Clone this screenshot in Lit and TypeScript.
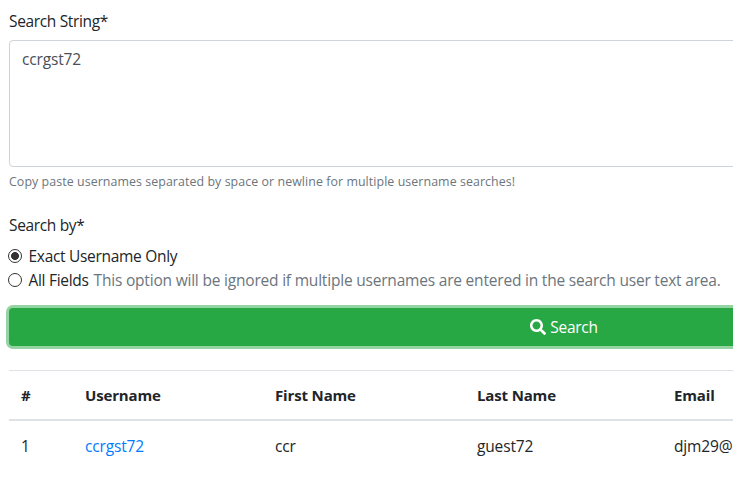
import { LitElement, html, css } from "lit";
import { customElement, state } from "lit/decorators.js";

interface User {
  username: string;
  first: string;
  last: string;
  email: string;
}

@customElement("app-root")
export class AppRoot extends LitElement {
  static styles = css`
    :host {
      display: block;
      box-sizing: border-box;
      height: 486px;
      overflow: hidden;
      background: #fff;
      color: #212529;
      font: 15.5px/24px "Open Sans", "Noto Sans", sans-serif;
      white-space: nowrap;
    }
    * {
      box-sizing: border-box;
    }
    .page {
      width: 1117px;
      padding: 9px 0 0 9px;
    }
    .label {
      display: block;
      height: 24px;
      margin-bottom: 7px;
      letter-spacing: -0.35px;
    }
    .area {
      display: block;
      width: 100%;
      height: 127px;
      padding: 6px 12px;
      border: 1px solid #ced4da;
      border-radius: 4px;
      color: #495057;
      background: #fff;
      font: inherit;
      letter-spacing: -0.15px;
      resize: none;
      outline: none;
    }
    .help {
      height: 20px;
      margin: 5px 0 21px;
      color: #6c757d;
      font-size: 12.4px;
      letter-spacing: 0.07px;
      line-height: 20px;
    }
    .option {
      display: flex;
      align-items: center;
      height: 24px;
      letter-spacing: -0.3px;
    }
    .radio {
      appearance: none;
      width: 14px;
      height: 14px;
      margin: 0 6.500px 1px -1px;
      border: 1.5px solid #333;
      border-radius: 50%;
      background: #fff;
    }
    .radio:checked {
      background: radial-gradient(circle, #333 3.6px, #fff 4.3px);
    }
    .muted {
      margin-left: 5px;
      color: #6c757d;
      letter-spacing: -0.2px;
    }
    .search {
      display: flex;
      align-items: center;
      justify-content: center;
      gap: 4px;
      width: 100%;
      height: 38px;
      margin-top: 16px;
      padding: 0 0 0 2px;
      border: 0;
      border-radius: 4px;
      box-shadow: 0 0 0 3px #94d3a2;
      background: #28a745;
      color: #fff;
      font: inherit;
      letter-spacing: -0.25px;
    }
    .icon {
      width: 16px;
      height: 16px;
    }
    .table {
      width: 100%;
      margin-top: 24px;
      border-collapse: separate;
      border-spacing: 0;
      table-layout: fixed;
    }
    th,
    td {
      padding: 12px;
      height: 49px;
      text-align: left;
    }
    th {
      height: 51px;
      border-top: 1px solid #dee2e6;
      border-bottom: 2px solid #dee2e6;
      font-weight: 700;
      font-size: 15px;
      letter-spacing: -0.15px;
    }
    td {
      letter-spacing: -0.15px;
    }
    .c-num { width: 64px; }
    .c-user { width: 190px; }
    .c-first { width: 202px; }
    .c-last { width: 197px; }
    .link {
      color: #007bff;
      text-decoration: none;
    }
  `;

  @state() private mode = "exact";

  private users: User[] = [
    { username: "ccrgst72", first: "ccr", last: "guest72", email: "djm29@" },
  ];

  render() {
    return html`
      <div class="page">
        <label class="label" for="q"><span>Search String*</span></label>
        <textarea class="area" id="q" spellcheck="false" .value=${"ccrgst72"}></textarea>
        <div class="help"><span>Copy paste usernames separated by space or newline for multiple username searches!</span></div>
        <div class="label"><span>Search by*</span></div>
        <label class="option">
          <input class="radio" type="radio" name="mode" .checked=${this.mode === "exact"} @change=${() => (this.mode = "exact")} />
          <span>Exact Username Only</span>
        </label>
        <label class="option">
          <input class="radio" type="radio" name="mode" .checked=${this.mode === "all"} @change=${() => (this.mode = "all")} />
          <span>All Fields</span>
          <span class="muted">This option will be ignored if multiple usernames are entered in the search user text area.</span>
        </label>
        <button class="search">
          <svg class="icon" viewBox="0 0 512 512" fill="currentColor" aria-hidden="true">
            <path d="M505 442.7L405.3 343c-4.5-4.500-10.600-7-17-7H372c27.600-35.300 44-79.700 44-128C416 93.100 322.900 0 208 0S0 93.100 0 208s93.100 208 208 208c48.300 0 92.700-16.400 128-44v16.300c0 6.400 2.500 12.500 7 17l99.700 99.700c9.400 9.400 24.600 9.400 33.900 0l28.300-28.300c9.400-9.400 9.400-24.600.1-34zM208 336c-70.700 0-128-57.200-128-128 0-70.700 57.200-128 128-128 70.700 0 128 57.200 128 128 0 70.700-57.200 128-128 128z" />
          </svg>
          <span>Search</span>
        </button>
        <table class="table">
          <colgroup>
            <col class="c-num" /><col class="c-user" /><col class="c-first" /><col class="c-last" /><col />
          </colgroup>
          <thead>
            <tr><th>#</th><th>Username</th><th>First Name</th><th>Last Name</th><th>Email</th></tr>
          </thead>
          <tbody>
            ${this.users.map(
              (u, i) => html`<tr>
                <td>${i + 1}</td>
                <td><a class="link" href="#">${u.username}</a></td>
                <td>${u.first}</td>
                <td>${u.last}</td>
                <td>${u.email}</td>
              </tr>`
            )}
          </tbody>
        </table>
      </div>
    `;
  }
}
